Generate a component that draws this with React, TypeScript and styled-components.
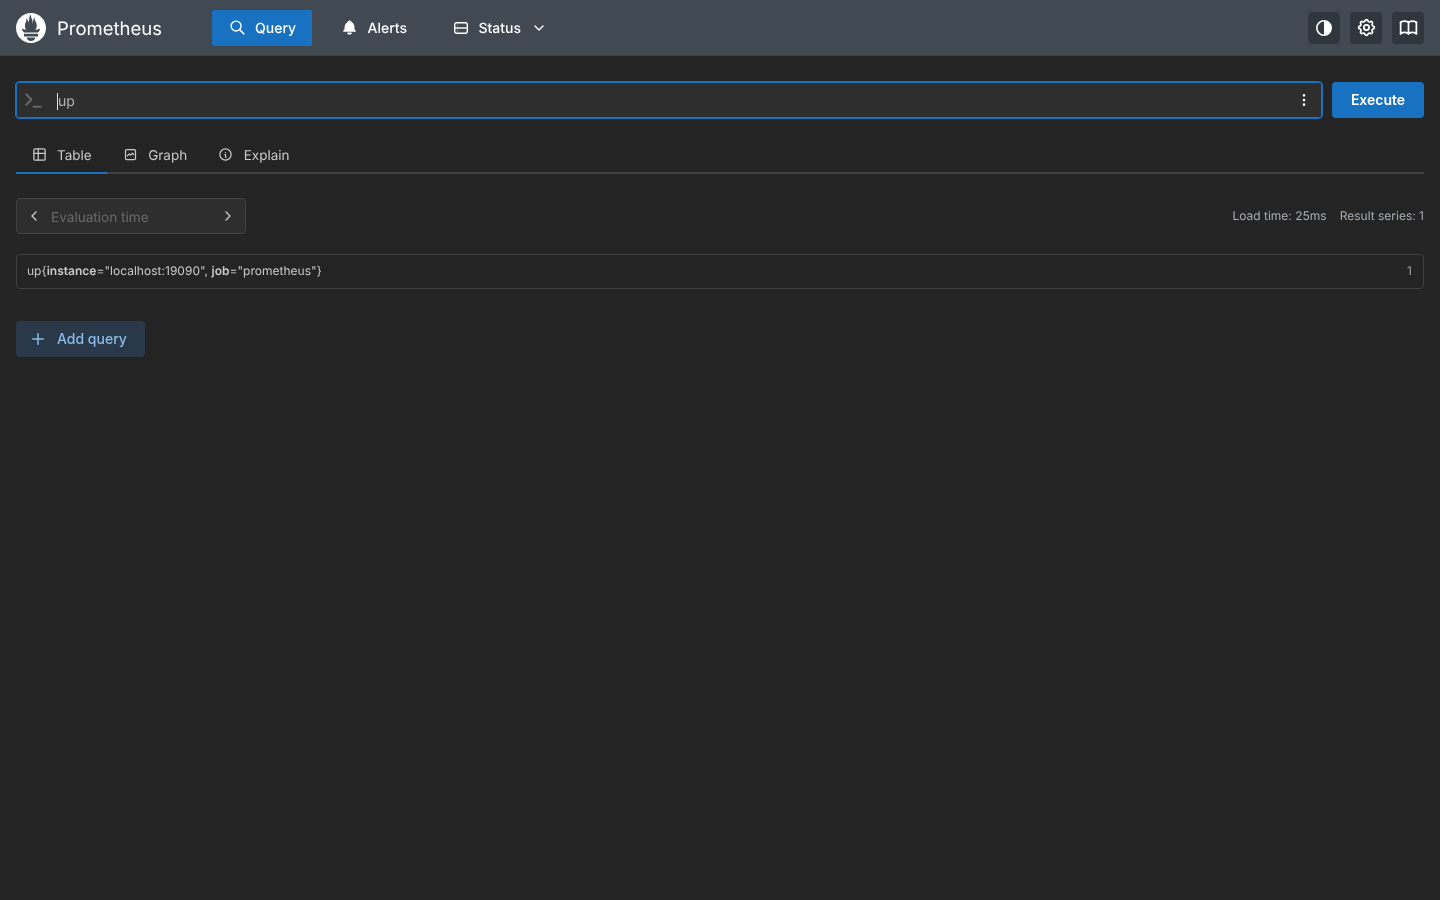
import React from "react";
import { SiPrometheus } from "react-icons/si";
import {
    TbBellFilled,
    TbBook,
    TbChevronDown,
    TbChevronLeft,
    TbChevronRight,
    TbDotsVertical,
    TbGraph,
    TbInfoCircle,
    TbPlus,
    TbSearch,
    TbSettings,
    TbTable,
    TbTerminal,
} from "react-icons/tb";
import styled, { createGlobalStyle } from "styled-components";

const GlobalStyle = createGlobalStyle`
    html, body {
        margin: 0;
        padding: 0;
        height: 100%;
        background: #242424;
    }

    body {
        font-family: Inter, "Liberation Sans", sans-serif;
        color: #c9c9c9;
        text-rendering: geometricPrecision;
    }

    * {
        box-sizing: border-box;
    }
`;

const Page = styled.div`
    min-height: 100vh;
    will-change: transform;
`;

const Header = styled.header`
    display: flex;
    align-items: center;
    justify-content: space-between;
    height: 56px;
    padding: 0 16px;
    background: #414a53;
    border-bottom: 1px solid #3a4149;
`;

const HeaderLeft = styled.div`
    display: flex;
    align-items: center;
`;

const Brand = styled.div`
    display: flex;
    align-items: center;
    gap: 11px;
    width: 196px;
    color: #fff;
    font-size: 18.5px;
    font-weight: 400;
`;

const Label = styled.span`
    margin-top: 2px;
`;

const Nav = styled.nav`
    display: flex;
    align-items: center;
    gap: 12.4px;
`;

const NavLink = styled.a<{ $active?: boolean }>`
    display: flex;
    align-items: center;
    gap: 8px;
    height: 36px;
    padding: 0 16px;
    border-radius: 2px;
    font-size: 14px;
    font-weight: 500;
    color: #fff;
    background: ${({ $active }) => ($active ? "#1971c2" : "transparent")};
`;

const NavIcon = styled.span`
    display: flex;
    align-items: center;
    justify-content: center;
    width: 19px;
`;

const NavChevron = styled.span`
    display: flex;
    margin-left: 2px;
`;

const HeaderActions = styled.div`
    display: flex;
    gap: 10px;
`;

const ActionButton = styled.button`
    display: flex;
    align-items: center;
    justify-content: center;
    width: 32px;
    height: 32px;
    padding: 0;
    border: 0;
    border-radius: 4px;
    background: #30363d;
    color: #fff;
`;

const Main = styled.main`
    padding: 26px 16px 16px;
`;

const QueryRow = styled.div`
    display: flex;
    gap: 10px;
`;

const ExpressionInput = styled.div`
    flex: 1;
    display: flex;
    align-items: center;
    height: 36px;
    padding: 0 9px 0 4px;
    background: #2e2e2e;
    border: 1px solid #1971c2;
    outline: 1px solid #1971c2;
    border-radius: 3px;
`;

const PromptIcon = styled.span`
    display: flex;
    width: 36px;
    margin-top: -1px;
    color: #666;
`;

const ExpressionText = styled.span`
    flex: 1;
    margin-top: 2px;
    font-size: 14px;
    color: #b4b4b4;
`;

const Caret = styled.span`
    border-left: 1px solid #e0e0e0;
`;

const MenuIcon = styled.span`
    display: flex;
    color: #fff;
`;

const ExecuteButton = styled.button`
    width: 92px;
    height: 36px;
    padding: 0 0 2px;
    border: 0;
    border-radius: 4px;
    background: #1971c2;
    color: #fff;
    font-family: inherit;
    font-size: 14px;
    font-weight: 600;
`;

const Tabs = styled.div`
    display: flex;
    height: 37px;
    margin-top: 19px;
    border-bottom: 2px solid #424242;
`;

const Tab = styled.div<{ $active?: boolean }>`
    display: flex;
    align-items: center;
    gap: 10.5px;
    height: 37px;
    padding: 0 15.5px;
    font-size: 13.5px;
    color: #c9c9c9;
    border-bottom: 2px solid ${({ $active }) => ($active ? "#1971c2" : "transparent")};
`;

const TabIcon = styled.span`
    display: flex;
    color: #c9c9c9;
`;

const ResultBar = styled.div`
    display: flex;
    align-items: center;
    justify-content: space-between;
    margin-top: 24px;
`;

const TimeInput = styled.div`
    display: flex;
    align-items: center;
    width: 230px;
    height: 36px;
    padding: 0 9px;
    background: #2e2e2e;
    border: 1px solid #424242;
    border-radius: 4px;
    color: #c9c9c9;
`;

const TimePlaceholder = styled.span`
    flex: 1;
    margin: 3px 0 0 9px;
    font-size: 13.6px;
    color: #696969;
`;

const Stats = styled.div`
    display: flex;
    gap: 13px;
    margin-bottom: 2px;
    font-size: 12px;
    color: #a9aeb3;
`;

const SeriesBox = styled.div`
    display: flex;
    align-items: center;
    justify-content: space-between;
    height: 35px;
    margin-top: 20px;
    padding: 0 10px 2px;
    border: 1px solid #424242;
    border-radius: 4px;
    font-size: 12px;
    letter-spacing: 0.02px;
    color: #c9c9c9;

    b {
        font-weight: 600;
    }
`;

const SeriesValue = styled.span`
    margin-right: 1px;
    color: #a0a0a0;
`;

const AddButton = styled.button`
    display: flex;
    align-items: center;
    gap: 10px;
    height: 36px;
    margin-top: 32px;
    padding: 0 18px 0 13px;
    border: 0;
    border-radius: 4px;
    background: #29394a;
    color: #8dbbe8;
    font-family: inherit;
    font-size: 14px;
    font-weight: 500;
`;

const AddLabel = styled.span`
    margin-bottom: 2px;
`;

export default function App() {
    return (
        <Page>
            <GlobalStyle />
            <Header>
                <HeaderLeft>
                    <Brand>
                        <SiPrometheus size={30} />
                        <Label>Prometheus</Label>
                    </Brand>
                    <Nav>
                        <NavLink $active>
                            <NavIcon>
                                <TbSearch size={17} />
                            </NavIcon>
                            <Label>Query</Label>
                        </NavLink>
                        <NavLink>
                            <NavIcon>
                                <TbBellFilled size={17} />
                            </NavIcon>
                            <Label>Alerts</Label>
                        </NavLink>
                        <NavLink>
                            <NavIcon>
                                <svg width="14" height="12" viewBox="0 0 14 12" fill="none" stroke="currentColor" strokeWidth="1.4">
                                    <rect x="0.7" y="0.7" width="12.6" height="10.6" rx="2" />
                                    <path d="M0.7 6h12.6" />
                                    <path d="M3.2 3.4h.4M3.2 8.7h.4" />
                                </svg>
                            </NavIcon>
                            <Label>Status</Label>
                            <NavChevron>
                                <TbChevronDown size={16} />
                            </NavChevron>
                        </NavLink>
                    </Nav>
                </HeaderLeft>
                <HeaderActions>
                    <ActionButton>
                        <svg width="20" height="20" viewBox="0 0 20 20">
                            <circle cx="10" cy="10" r="7.2" fill="none" stroke="currentColor" strokeWidth="1.6" />
                            <path d="M10 2.8a7.2 7.2 0 0 1 0 14.4z" fill="currentColor" />
                        </svg>
                    </ActionButton>
                    <ActionButton>
                        <TbSettings size={21} />
                    </ActionButton>
                    <ActionButton>
                        <TbBook size={21} />
                    </ActionButton>
                </HeaderActions>
            </Header>
            <Main>
                <QueryRow>
                    <ExpressionInput>
                        <PromptIcon>
                            <TbTerminal size={25} />
                        </PromptIcon>
                        <ExpressionText>
                            <Caret />
                            up
                        </ExpressionText>
                        <MenuIcon>
                            <TbDotsVertical size={16} />
                        </MenuIcon>
                    </ExpressionInput>
                    <ExecuteButton>Execute</ExecuteButton>
                </QueryRow>
                <Tabs>
                    <Tab $active>
                        <TabIcon>
                            <TbTable size={15} />
                        </TabIcon>
                        <Label>Table</Label>
                    </Tab>
                    <Tab>
                        <TabIcon>
                            <TbGraph size={15} />
                        </TabIcon>
                        <Label>Graph</Label>
                    </Tab>
                    <Tab>
                        <TabIcon>
                            <TbInfoCircle size={15} />
                        </TabIcon>
                        <Label>Explain</Label>
                    </Tab>
                </Tabs>
                <ResultBar>
                    <TimeInput>
                        <TbChevronLeft size={16} />
                        <TimePlaceholder>Evaluation time</TimePlaceholder>
                        <TbChevronRight size={16} />
                    </TimeInput>
                    <Stats>
                        <span>Load time: 25ms</span>
                        <span>Result series: 1</span>
                    </Stats>
                </ResultBar>
                <SeriesBox>
                    <span>
                        up{"{"}
                        <b>instance</b>="localhost:19090", <b>job</b>="prometheus"{"}"}
                    </span>
                    <SeriesValue>1</SeriesValue>
                </SeriesBox>
                <AddButton>
                    <TbPlus size={18} />
                    <AddLabel>Add query</AddLabel>
                </AddButton>
            </Main>
        </Page>
    );
}
